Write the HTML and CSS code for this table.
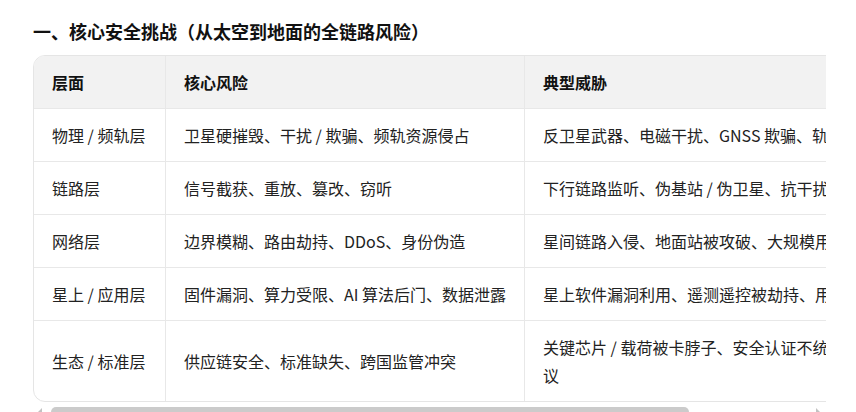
FILE: index.html
```html
<!DOCTYPE html>
<html lang="zh-CN">
<head>
<meta charset="utf-8">
<title>核心安全挑战</title>
<link rel="stylesheet" href="styles.css">
</head>
<body>
<main class="page">
  <h3 class="title">一、核心安全挑战（从太空到地面的全链路风险）</h3>
  <div class="scroller">
    <table class="grid">
      <colgroup><col class="w1"><col class="w2"><col class="w3"></colgroup>
      <thead>
        <tr><th>层面</th><th>核心风险</th><th>典型威胁</th></tr>
      </thead>
      <tbody>
        <tr><td>物理 / 频轨层</td><td>卫星硬摧毁、干扰 / 欺骗、频轨资源侵占</td><td>反卫星武器、电磁干扰、GNSS 欺骗、轨道碎片攻击</td></tr>
        <tr><td>链路层</td><td>信号截获、重放、篡改、窃听</td><td>下行链路监听、伪基站 / 伪卫星、抗干扰能力不足</td></tr>
        <tr><td>网络层</td><td>边界模糊、路由劫持、DDoS、身份伪造</td><td>星间链路入侵、地面站被攻破、大规模用户终端被控</td></tr>
        <tr><td>星上 / 应用层</td><td>固件漏洞、算力受限、AI 算法后门、数据泄露</td><td>星上软件漏洞利用、遥测遥控被劫持、用户数据泄露</td></tr>
        <tr><td>生态 / 标准层</td><td>供应链安全、标准缺失、跨国监管冲突</td><td>关键芯片 / 载荷被卡脖子、安全认证不统一、缺少互操作协议</td></tr>
      </tbody>
    </table>
  </div>
  <div class="sbar" aria-hidden="true">
    <span class="arrow arrow-left"></span>
    <span class="thumb"></span>
    <span class="arrow arrow-right"></span>
  </div>
</main>
</body>
</html>
```
FILE: styles.css
```css
html, body {
  margin: 0;
  background: #ffffff;
}
body {
  font-family: "Noto Sans CJK SC", "Noto Sans", sans-serif;
  color: #222222;
}
.page {
  padding: 17px 30px 0 33px;
}
.title {
  margin: 0 0 10px;
  font-size: 18px;
  line-height: 28px;
  font-weight: 700;
  color: #111111;
}
.scroller {
  overflow-x: auto;
  scrollbar-width: none;
}
.grid {
  border-collapse: separate;
  border-spacing: 0;
  table-layout: fixed;
  width: 945px;
  border: 1px solid #e5e5e5;
  border-radius: 12px;
  font-size: 16px;
  line-height: 28px;
}
.w1 { width: 132px; }
.w2 { width: 359px; }
.w3 { width: 452px; }
.grid th,
.grid td {
  padding: 12px 18px;
  text-align: left;
  vertical-align: middle;
  border-right: 1px solid #e8e8e8;
  border-bottom: 1px solid #e8e8e8;
}
.grid th:last-child,
.grid td:last-child {
  border-right: 0;
}
.grid tbody tr:last-child td {
  border-bottom: 0;
}
.grid th {
  background: #f2f2f2;
  font-weight: 700;
  color: #111111;
}
.grid th:first-child {
  border-top-left-radius: 11px;
}
.grid th:last-child {
  border-top-right-radius: 11px;
}
.grid tbody tr:last-child td:first-child {
  border-bottom-left-radius: 11px;
}

/* visual horizontal scrollbar of the table */
.sbar {
  display: flex;
  align-items: center;
  height: 10px;
  margin-top: 5px;
  padding: 0 6px 0 5px;
}
.arrow {
  width: 0;
  height: 0;
  border-top: 4px solid transparent;
  border-bottom: 4px solid transparent;
}
.arrow-left {
  border-right: 4px solid #c2c2c2;
}
.arrow-right {
  margin-left: auto;
  border-left: 4px solid #c2c2c2;
}
.thumb {
  width: 638px;
  height: 10px;
  margin-left: 9px;
  border-radius: 5px;
  background: #cbcbcb;
}
```
